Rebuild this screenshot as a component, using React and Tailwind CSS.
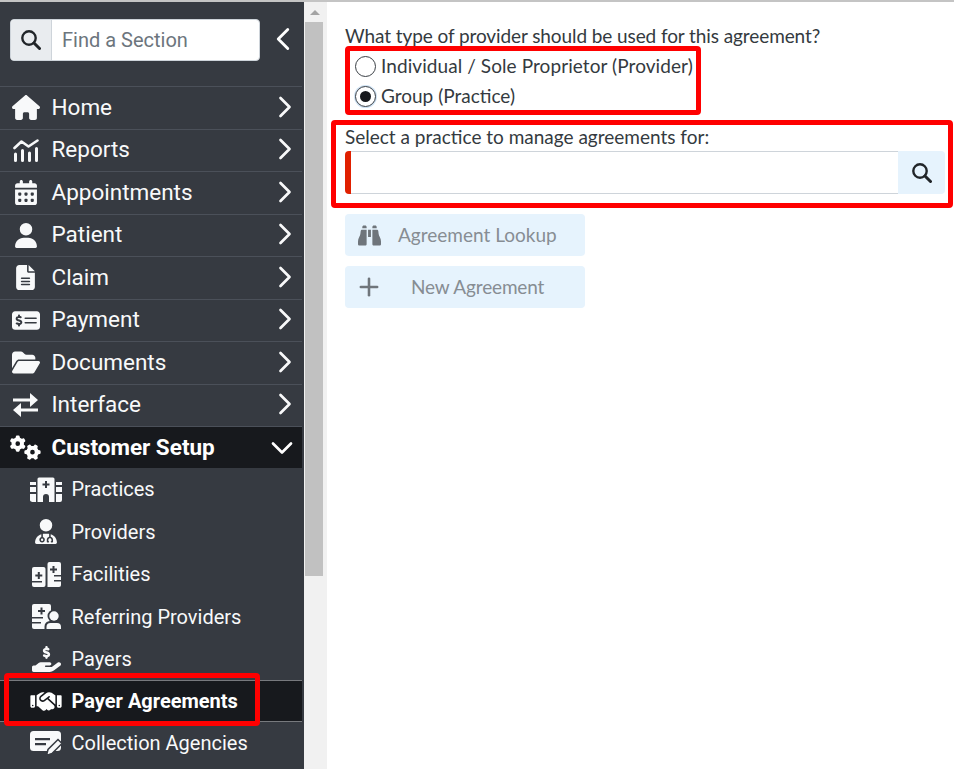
import {
    FaHouse,
    FaCalendarDays,
    FaUser,
    FaFileLines,
    FaMoneyCheckDollar,
    FaFolderOpen,
    FaGears,
    FaUserDoctor,
    FaHandHoldingDollar,
    FaHandshake,
    FaBinoculars,
} from "react-icons/fa6";
import { ChevronLeft, ChevronRight, ChevronDown, Plus } from "lucide-react";

const BG = "#363a41";

function SearchIcon({ className }) {
    return (
        <svg viewBox="0 0 20 20" className={className} fill="none" stroke="currentColor" strokeLinecap="round">
            <circle cx="8" cy="8" r="6.700" strokeWidth="2.400" />
            <path d="M13 13l5.500 5.500" strokeWidth="3" />
        </svg>
    );
}

function ChartIcon({ className }) {
    return (
        <svg viewBox="0 0 26 23" className={className} fill="none" stroke="currentColor" strokeLinecap="round" strokeLinejoin="round">
            <path d="M1.5 9 L8.5 2.500 L15.500 7.500 L24.500 1.500" strokeWidth="2.600" />
            <path d="M2.500 15v6.500M9.500 11.500v10M16.500 14v7.500M23.500 9.500v12" strokeWidth="3" />
        </svg>
    );
}

function HospitalsIcon({ className }) {
    return (
        <svg viewBox="0 0 32 25" className={className} fill="currentColor">
            <path d="M9 0.500h14a1.500 1.500 0 0 1 1.500 1.500v23h-5.500v-5a3 3 0 0 0-6 0v5h-5.500v-23a1.500 1.500 0 0 1 1.500-1.500z" />
            <path d="M15 4h2v2.500h2.500v2h-2.500v2.500h-2v-2.500h-2.500v-2h2.500z" fill={BG} />
            <path d="M0 5h6v3h-6zM0 10h6v5h-6zM0 17h6v8h-2a4 2 0 0 1-4-2zM26 5h6v3h-6zM26 10h6v5h-6zM26 17h6v6a2 2 0 0 1-2 2h-4z" />
        </svg>
    );
}

function FacilitiesIcon({ className }) {
    return (
        <svg viewBox="0 0 29 25" className={className} fill="currentColor">
            <rect x="0" y="5" width="13.500" height="20" rx="2" />
            <path d="M15.500 2a2 2 0 0 1 2-2h9.500a2 2 0 0 1 2 2v21a2 2 0 0 1-2 2h-11.500z" />
            <path d="M5.800 10h2v2.500h2.500v2h-2.500v2.500h-2v-2.500h-2.500v-2h2.500z" fill={BG} />
            <path d="M20.500 4h2v2.500h2.500v2h-2.500v2.500h-2v-2.500h-2.500v-2h2.500z" fill={BG} />
            <path d="M0 19h10v1.600h-10zM22 13h7v1.600h-7zM22 18h7v1.600h-7z" fill={BG} />
        </svg>
    );
}

function ReferringIcon({ className }) {
    return (
        <svg viewBox="0 0 29 25" className={className} fill="currentColor">
            <rect x="0" y="0" width="19" height="25" rx="2" />
            <path d="M8.500 3.500h2v2.500h2.500v2h-2.500v2.500h-2v-2.500h-2.500v-2h2.500z" fill={BG} />
            <path d="M0 13h11v1.600h-11zM0 18h9v1.600h-9z" fill={BG} />
            <circle cx="22" cy="12" r="6.500" fill={BG} />
            <circle cx="22" cy="12" r="4.700" />
            <path d="M12.500 25v-2.500a5.500 5.500 0 0 1 5.500-5.500h8a3.500 3.500 0 0 1 3 3.500v4.500z" fill={BG} />
            <path d="M14.500 25v-2a4 4 0 0 1 4-4h6.500a4 4 0 0 1 4 4v2z" />
        </svg>
    );
}

function CollectionIcon({ className }) {
    return (
        <svg viewBox="0 0 32 25" className={className} fill="currentColor">
            <rect x="0" y="0" width="31" height="20" rx="3.500" />
            <path d="M5 7h15v2.200h-15zM5 12h11v2.200h-11z" fill={BG} />
            <path d="M28 8.500l4 4-10 10-5.500 2 1.500-6z" stroke={BG} strokeWidth="1.500" />
        </svg>
    );
}

function SwapIcon({ className }) {
    return (
        <svg viewBox="0 0 25 24" className={className} fill="currentColor">
            <path d="M0 5.500h17v-5.500l8 7-8 7v-5.500h-17z" />
            <path d="M25 15.500h-17v-5.500l-8 7 8 7v-5.500h17z" />
        </svg>
    );
}

const topItems = [
    { label: "Home", Icon: FaHouse, icon: "w-[28px] h-[25px]" },
    { label: "Reports", Icon: ChartIcon, icon: "w-[26px] h-[23px]" },
    { label: "Appointments", Icon: FaCalendarDays, icon: "w-[22px] h-[25px]" },
    { label: "Patient", Icon: FaUser, icon: "w-[22px] h-[25px]" },
    { label: "Claim", Icon: FaFileLines, icon: "w-[19px] h-[25px]" },
    { label: "Payment", Icon: FaMoneyCheckDollar, icon: "w-[28px] h-[25px]" },
    { label: "Documents", Icon: FaFolderOpen, icon: "w-[28px] h-[25px]" },
    { label: "Interface", Icon: SwapIcon, icon: "w-[25px] h-[24px]" },
];

const subItems = [
    { label: "Practices", Icon: HospitalsIcon, icon: "w-[32px] h-[25px]" },
    { label: "Providers", Icon: FaUserDoctor, icon: "w-[22px] h-[25px]" },
    { label: "Facilities", Icon: FacilitiesIcon, icon: "w-[29px] h-[25px]" },
    { label: "Referring Providers", Icon: ReferringIcon, icon: "w-[29px] h-[25px]" },
    { label: "Payers", Icon: FaHandHoldingDollar, icon: "w-[29px] h-[26px]", short: true },
    { label: "Payer Agreements", Icon: FaHandshake, icon: "w-[32px] h-[25px]", active: true, short: true },
    { label: "Collection Agencies", Icon: CollectionIcon, icon: "w-[32px] h-[25px]" },
];

function TopRow({ label, Icon, icon }) {
    return (
        <div className="flex h-[42.5px] w-[302px] items-center border-t border-[#4b5059] text-[#f8f9fa]">
            <div className="flex w-[51.5px] justify-center">
                <Icon className={icon} />
            </div>
            <span className="flex-1 text-[22.5px]">{label}</span>
            <ChevronRight className="-mr-[1px] mb-[2px] h-[36px] w-[36px]" strokeWidth={1.8} />
        </div>
    );
}

function SubRow({ label, Icon, icon, active, short }) {
    return (
        <div
            className={
                (short ? "h-[42px] " : "h-[42.5px] ") +
                (active
                    ? "flex w-[302px] items-center border-y border-[#77797d] bg-[#17191d] text-white"
                    : "flex w-[302px] items-center text-[#f8f9fa]")
            }
        >
            <div className="flex w-[71.5px] justify-center pl-[30px] pr-[9.5px]">
                <Icon className={"shrink-0 " + icon} />
            </div>
            <span className={active ? "text-[20px] font-bold" : "text-[20px]"}>{label}</span>
        </div>
    );
}

function Sidebar() {
    return (
        <aside className="h-full w-[304px] shrink-0 overflow-hidden bg-[#363a41] font-['Roboto',sans-serif]">
            <div className="flex h-[84px] items-start pl-[10px] pt-[17px]">
                <div className="flex h-[42px] w-[250px] overflow-hidden rounded border border-[#ced4da] bg-white">
                    <div className="flex w-[41px] items-center justify-center border-r border-[#ced4da] bg-[#e9ecef] text-[#212529]">
                        <SearchIcon className="h-[20px] w-[20px]" />
                    </div>
                    <span className="flex items-center pl-[10px] text-[20px] text-[#6c757d]">Find a Section</span>
                </div>
                <ChevronLeft className="ml-[4px] mt-[1px] h-[38px] w-[38px] text-white" strokeWidth={1.8} />
            </div>
            {topItems.map((item) => (
                <TopRow key={item.label} {...item} />
            ))}
            <div className="flex h-[42px] w-[302px] items-center border-t border-[#4b5059] bg-[#17191d] text-white">
                <div className="flex w-[51.5px] justify-center">
                    <FaGears className="h-[25px] w-[31px]" />
                </div>
                <span className="flex-1 text-[22.5px] font-bold">Customer Setup</span>
                <ChevronDown className="mr-[2px] h-[36px] w-[36px]" strokeWidth={1.8} />
            </div>
            {subItems.map((item) => (
                <SubRow key={item.label} {...item} />
            ))}
        </aside>
    );
}

function Scrollbar() {
    return (
        <div className="flex h-full w-[21px] shrink-0 flex-col bg-[#f1f1f1] px-[1px]">
            <div className="flex h-[20px] items-center justify-center">
                <div className="h-0 w-0 border-x-[5px] border-b-[5px] border-x-transparent border-b-[#a3a3a3]" />
            </div>
            <div className="h-[554px] w-[18px] bg-[#c1c1c1]" />
        </div>
    );
}

function Radio({ checked, label, textClass }) {
    return (
        <label className="flex h-[30px] items-center">
            <span
                className={
                    checked
                        ? "ml-[10px] flex h-[21px] w-[21px] items-center justify-center rounded-full border border-[#3a3f45] bg-white shadow-[0_0_0_1px_#cfe2f3]"
                        : "ml-[10px] flex h-[21px] w-[21px] items-center justify-center rounded-full border border-[#3a3f45] bg-white"
                }
            >
                {checked && <span className="h-[11px] w-[11px] rounded-full bg-[#17191d]" />}
            </span>
            <span className={"ml-[5px] " + (textClass || "")}>{label}</span>
        </label>
    );
}

function ActionButton({ icon, label, textClass }) {
    return (
        <div className="flex h-[42px] w-[240px] items-center rounded bg-[#e6f3fd] text-[#878d93]">
            <div className="flex w-[48px] justify-center text-[#6f757b]">{icon}</div>
            <span className={textClass}>{label}</span>
        </div>
    );
}

function Main() {
    return (
        <main className="min-w-0 flex-1 border-l-2 border-[#f1f1f1] bg-white pl-[18px] pr-[9px] pt-[22px] font-['Lato',sans-serif] text-[19px] leading-[24px] text-[#343a40]">
            <p className="tracking-[-0.09px]">What type of provider should be used for this agreement?</p>
            <div className="mt-[3px]">
                <Radio label="Individual / Sole Proprietor (Provider)" textClass="tracking-[0.08px]" />
                <Radio checked label="Group (Practice)" />
            </div>
            <p className="mt-[14px]">Select a practice to manage agreements for:</p>
            <div className="mt-[2px] flex h-[43px]">
                <div className="w-[6px] rounded-l bg-[#e02000]" />
                <div className="flex-1 border-y border-[#ced4da] bg-white" />
                <div className="flex w-[47px] items-center justify-center rounded-r bg-[#e6f3fd] text-[#212529]">
                    <SearchIcon className="h-[20px] w-[20px]" />
                </div>
            </div>
            <div className="mt-[20px] flex flex-col gap-[10px]">
                <ActionButton icon={<FaBinoculars className="h-[23px] w-[23px]" />} label="Agreement Lookup" textClass="ml-[5px]" />
                <ActionButton icon={<Plus className="h-[28px] w-[28px]" strokeWidth={2.2} />} label="New Agreement" textClass="ml-[18px] tracking-[-0.15px]" />
            </div>
        </main>
    );
}

export default function App() {
    return (
        <div className="relative flex h-screen w-full flex-col overflow-hidden bg-white">
            <div className="h-[2px] shrink-0 bg-[#c4c4c4]" />
            <div className="flex min-h-0 flex-1">
                <Sidebar />
                <Scrollbar />
                <Main />
            </div>
            {/* red annotation boxes from the screenshot */}
            <div className="absolute left-[345px] top-[46px] h-[69px] w-[356px] rounded-sm border-[5px] border-[#ff0000]" />
            <div className="absolute left-[331px] top-[120px] h-[88px] w-[622px] rounded-sm border-[5px] border-[#ff0000]" />
            <div className="absolute left-[4px] top-[673px] h-[53px] w-[256px] rounded-sm border-[5px] border-[#ff0000]" />
        </div>
    );
}
